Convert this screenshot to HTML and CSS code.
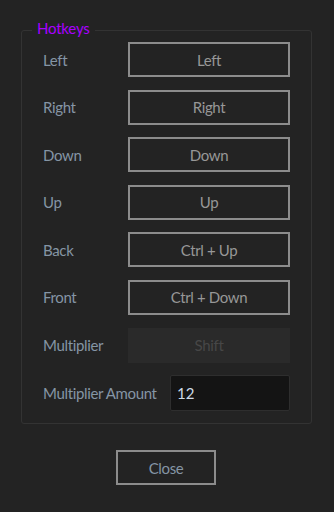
FILE: index.html
```html
<!DOCTYPE html>
<html>
<head>
<meta charset="utf-8">
<link rel="stylesheet" href="styles.css">
</head>
<body>
<div class="dialog">
  <fieldset class="group">
    <legend class="group-title">Hotkeys</legend>
    <div class="rows">
      <div class="row"><span class="label">Left</span><button class="key">Left</button></div>
      <div class="row"><span class="label">Right</span><button class="key">Right</button></div>
      <div class="row"><span class="label">Down</span><button class="key">Down</button></div>
      <div class="row"><span class="label">Up</span><button class="key">Up</button></div>
      <div class="row"><span class="label">Back</span><button class="key">Ctrl + Up</button></div>
      <div class="row"><span class="label">Front</span><button class="key">Ctrl + Down</button></div>
      <div class="row"><span class="label">Multiplier</span><button class="key key-disabled" disabled>Shift</button></div>
      <div class="row"><span class="label">Multiplier Amount</span><input class="amount" type="text" value="12"></div>
    </div>
  </fieldset>
  <div class="footer"><button class="close">Close</button></div>
</div>
</body>
</html>
```
FILE: styles.css
```css
html, body {
  margin: 0;
  padding: 0;
  background: #232323;
  height: 100%;
}
body {
  font-family: Lato, "Liberation Sans", sans-serif;
  font-size: 15px;
  letter-spacing: -0.35px;
  color: #8a99a8;
}
.dialog {
  padding: 20px 22px 0 21px;
}
.group {
  margin: 0;
  border: 1px solid #333333;
  border-radius: 3px;
  padding: 1px 21px 12px 21px;
}
.group-title {
  margin-left: -11px;
  padding: 0 5px 4px 5px;
  color: #a800ff;
  font-size: 15px;
  line-height: 17px;
  letter-spacing: -0.2px;
}
.rows {
  display: flex;
  flex-direction: column;
  gap: 12.6px;
}
.row {
  display: flex;
  align-items: center;
  justify-content: space-between;
  height: 35px;
}
.label {
  color: #8595a5;
  white-space: nowrap;
}
.key {
  width: 162px;
  height: 35px;
  box-sizing: border-box;
  background: #232323;
  border: 2px solid #8c8c8c;
  color: #979797;
  font-family: inherit;
  font-size: 15px;
  letter-spacing: -0.35px;
  padding: 0;
}
.key-disabled {
  background: #2a2a2a;
  border-color: #2a2a2a;
  color: #474747;
}
.amount {
  width: 120px;
  height: 36px;
  box-sizing: border-box;
  background: #141414;
  border: 1px solid #2e2e2e;
  border-radius: 2px;
  color: #cddbe8;
  font-family: inherit;
  font-size: 15px;
  padding: 0 6px;
  outline: none;
}
.row:last-child {
  height: 36px;
}
.footer {
  display: flex;
  justify-content: center;
  margin-top: 26px;
  padding-right: 1px;
}
.close {
  width: 100px;
  height: 35px;
  box-sizing: border-box;
  background: #232323;
  border: 2px solid #8c8c8c;
  color: #8595a5;
  font-family: inherit;
  font-size: 15px;
  letter-spacing: -0.35px;
  padding: 0;
}
```
